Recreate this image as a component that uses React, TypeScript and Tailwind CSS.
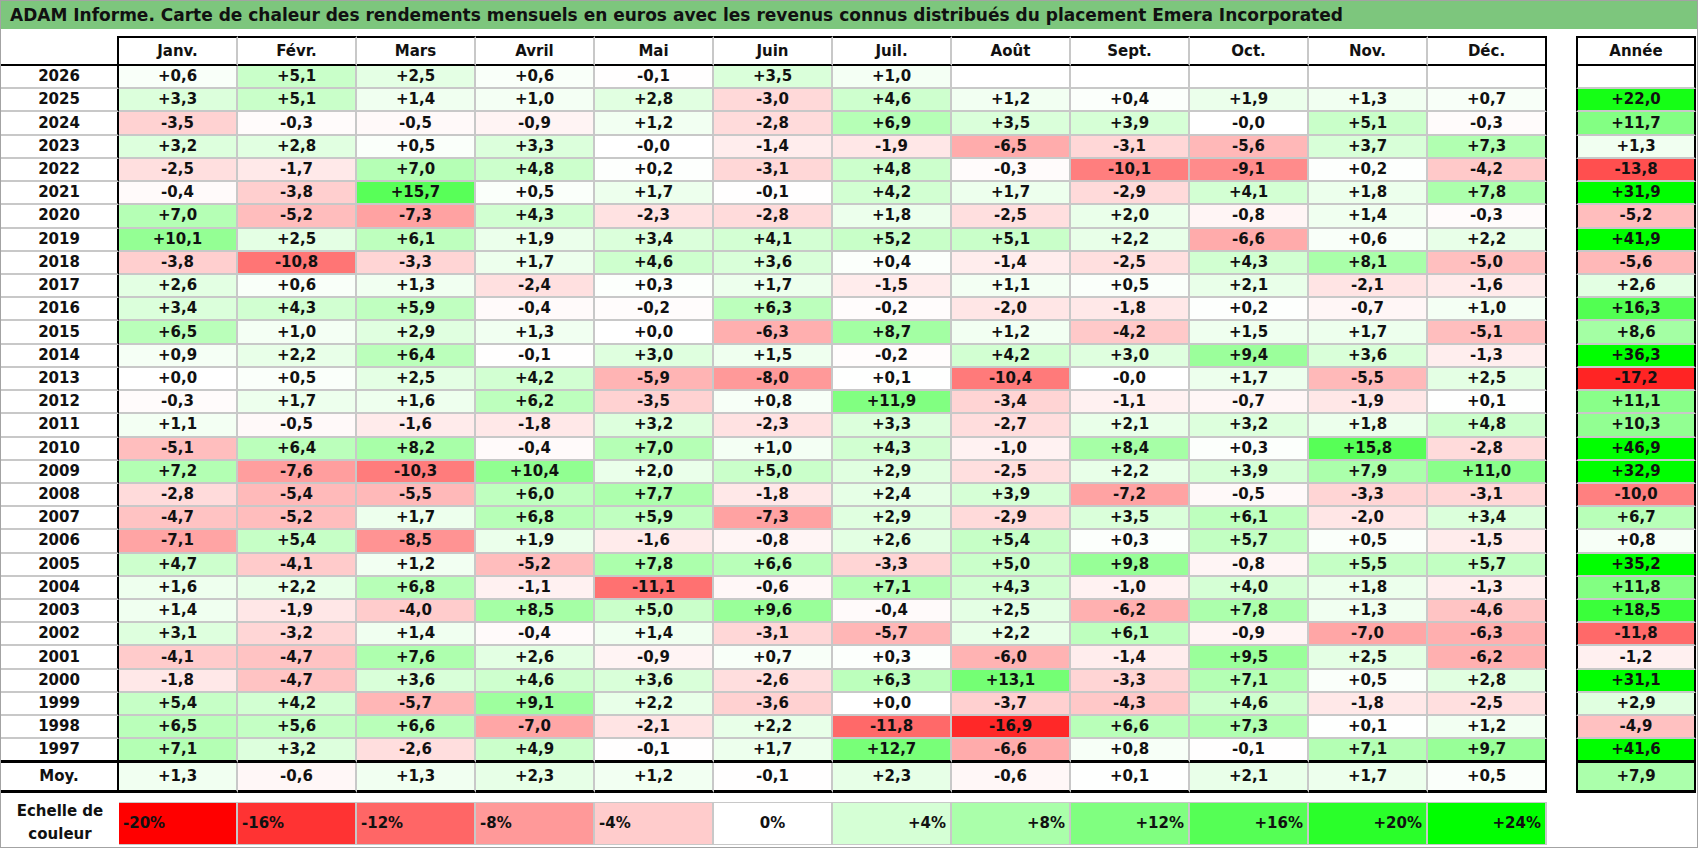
const MONTHS = ["Janv.", "Févr.", "Mars", "Avril", "Mai", "Juin", "Juil.", "Août", "Sept.", "Oct.", "Nov.", "Déc."];

// année, rendements mensuels, total annuel
const ROWS: [string, string, string][] = [
  ["2026", "+0,6 +5,1 +2,5 +0,6 -0,1 +3,5 +1,0", ""],
  ["2025", "+3,3 +5,1 +1,4 +1,0 +2,8 -3,0 +4,6 +1,2 +0,4 +1,9 +1,3 +0,7", "+22,0"],
  ["2024", "-3,5 -0,3 -0,5 -0,9 +1,2 -2,8 +6,9 +3,5 +3,9 -0,0 +5,1 -0,3", "+11,7"],
  ["2023", "+3,2 +2,8 +0,5 +3,3 -0,0 -1,4 -1,9 -6,5 -3,1 -5,6 +3,7 +7,3", "+1,3"],
  ["2022", "-2,5 -1,7 +7,0 +4,8 +0,2 -3,1 +4,8 -0,3 -10,1 -9,1 +0,2 -4,2", "-13,8"],
  ["2021", "-0,4 -3,8 +15,7 +0,5 +1,7 -0,1 +4,2 +1,7 -2,9 +4,1 +1,8 +7,8", "+31,9"],
  ["2020", "+7,0 -5,2 -7,3 +4,3 -2,3 -2,8 +1,8 -2,5 +2,0 -0,8 +1,4 -0,3", "-5,2"],
  ["2019", "+10,1 +2,5 +6,1 +1,9 +3,4 +4,1 +5,2 +5,1 +2,2 -6,6 +0,6 +2,2", "+41,9"],
  ["2018", "-3,8 -10,8 -3,3 +1,7 +4,6 +3,6 +0,4 -1,4 -2,5 +4,3 +8,1 -5,0", "-5,6"],
  ["2017", "+2,6 +0,6 +1,3 -2,4 +0,3 +1,7 -1,5 +1,1 +0,5 +2,1 -2,1 -1,6", "+2,6"],
  ["2016", "+3,4 +4,3 +5,9 -0,4 -0,2 +6,3 -0,2 -2,0 -1,8 +0,2 -0,7 +1,0", "+16,3"],
  ["2015", "+6,5 +1,0 +2,9 +1,3 +0,0 -6,3 +8,7 +1,2 -4,2 +1,5 +1,7 -5,1", "+8,6"],
  ["2014", "+0,9 +2,2 +6,4 -0,1 +3,0 +1,5 -0,2 +4,2 +3,0 +9,4 +3,6 -1,3", "+36,3"],
  ["2013", "+0,0 +0,5 +2,5 +4,2 -5,9 -8,0 +0,1 -10,4 -0,0 +1,7 -5,5 +2,5", "-17,2"],
  ["2012", "-0,3 +1,7 +1,6 +6,2 -3,5 +0,8 +11,9 -3,4 -1,1 -0,7 -1,9 +0,1", "+11,1"],
  ["2011", "+1,1 -0,5 -1,6 -1,8 +3,2 -2,3 +3,3 -2,7 +2,1 +3,2 +1,8 +4,8", "+10,3"],
  ["2010", "-5,1 +6,4 +8,2 -0,4 +7,0 +1,0 +4,3 -1,0 +8,4 +0,3 +15,8 -2,8", "+46,9"],
  ["2009", "+7,2 -7,6 -10,3 +10,4 +2,0 +5,0 +2,9 -2,5 +2,2 +3,9 +7,9 +11,0", "+32,9"],
  ["2008", "-2,8 -5,4 -5,5 +6,0 +7,7 -1,8 +2,4 +3,9 -7,2 -0,5 -3,3 -3,1", "-10,0"],
  ["2007", "-4,7 -5,2 +1,7 +6,8 +5,9 -7,3 +2,9 -2,9 +3,5 +6,1 -2,0 +3,4", "+6,7"],
  ["2006", "-7,1 +5,4 -8,5 +1,9 -1,6 -0,8 +2,6 +5,4 +0,3 +5,7 +0,5 -1,5", "+0,8"],
  ["2005", "+4,7 -4,1 +1,2 -5,2 +7,8 +6,6 -3,3 +5,0 +9,8 -0,8 +5,5 +5,7", "+35,2"],
  ["2004", "+1,6 +2,2 +6,8 -1,1 -11,1 -0,6 +7,1 +4,3 -1,0 +4,0 +1,8 -1,3", "+11,8"],
  ["2003", "+1,4 -1,9 -4,0 +8,5 +5,0 +9,6 -0,4 +2,5 -6,2 +7,8 +1,3 -4,6", "+18,5"],
  ["2002", "+3,1 -3,2 +1,4 -0,4 +1,4 -3,1 -5,7 +2,2 +6,1 -0,9 -7,0 -6,3", "-11,8"],
  ["2001", "-4,1 -4,7 +7,6 +2,6 -0,9 +0,7 +0,3 -6,0 -1,4 +9,5 +2,5 -6,2", "-1,2"],
  ["2000", "-1,8 -4,7 +3,6 +4,6 +3,6 -2,6 +6,3 +13,1 -3,3 +7,1 +0,5 +2,8", "+31,1"],
  ["1999", "+5,4 +4,2 -5,7 +9,1 +2,2 -3,6 +0,0 -3,7 -4,3 +4,6 -1,8 -2,5", "+2,9"],
  ["1998", "+6,5 +5,6 +6,6 -7,0 -2,1 +2,2 -11,8 -16,9 +6,6 +7,3 +0,1 +1,2", "-4,9"],
  ["1997", "+7,1 +3,2 -2,6 +4,9 -0,1 +1,7 +12,7 -6,6 +0,8 -0,1 +7,1 +9,7", "+41,6"],
];
const AVG = "+1,3 -0,6 +1,3 +2,3 +1,2 -0,1 +2,3 -0,6 +0,1 +2,1 +1,7 +0,5".split(" ");
const AVG_YEAR = "+7,9";
const SCALE = [-20, -16, -12, -8, -4, 0, 4, 8, 12, 16, 20, 24];

// rouge plein à -20 %, vert plein à +24 %
function heat(v: number | null) {
  if (v === null || v === 0) return "#ffffff";
  if (v < 0) {
    const c = Math.round(255 * (1 - Math.min(-v / 20, 1)));
    return `rgb(255,${c},${c})`;
  }
  const c = Math.round(255 * (1 - Math.min(v / 24, 1)));
  return `rgb(${c},255,${c})`;
}

const num = (s: string) => (s ? Number(s.replace(",", ".")) : null);

export default function App() {
  const rowBottom = (last: boolean) =>
    last ? "border-b-[3px] border-b-black" : "border-b-2 border-b-[#c8c8c8]";

  return (
    <div className="w-[1698px] h-[848px] overflow-hidden border border-[#a3a3a3] bg-white font-['DejaVu_Sans',sans-serif] text-[#111] font-bold">
      <div className="flex h-[28px] items-center bg-[#7dc67d] pl-[9px] text-[17px] leading-none">
        ADAM Informe. Carte de chaleur des rendements mensuels en euros avec les revenus connus distribués du placement Emera Incorporated
      </div>

      <div className="mt-[7px] grid grid-cols-[118px_repeat(12,119px)_29px_120px] text-[15px] leading-none">
        {/* en-tête */}
        <div className="h-[30px] border-b-2 border-r-2 border-b-black border-r-black" />
        {MONTHS.map((m, i) => (
          <div
            key={m}
            className={`flex h-[30px] items-center justify-center border-y-2 border-r-2 border-y-black ${
              i === 11 ? "border-r-black" : "border-r-[#c8c8c8]"
            }`}
          >
            {m}
          </div>
        ))}
        <div />
        <div className="flex h-[30px] items-center justify-center border-2 border-black">Année</div>

        {/* années */}
        {ROWS.map(([year, vals, total], ri) => {
          const last = ri === ROWS.length - 1;
          const list = vals.split(" ");
          return [
            <div key={year} className={`flex h-[23.23px] items-center justify-center border-r-2 border-r-black ${rowBottom(last)}`}>
              {year}
            </div>,
            ...MONTHS.map((m, mi) => {
              const s = list[mi] ?? "";
              return (
                <div
                  key={year + m}
                  style={{ backgroundColor: heat(num(s)) }}
                  className={`flex h-[23.23px] items-center justify-center border-r-2 ${
                    mi === 11 ? "border-r-black" : "border-r-[#c8c8c8]"
                  } ${rowBottom(last)}`}
                >
                  {s}
                </div>
              );
            }),
            <div key={year + "gap"} />,
            <div
              key={year + "y"}
              style={{ backgroundColor: heat(num(total)) }}
              className={`flex h-[23.23px] items-center justify-center border-x-2 border-x-black ${rowBottom(last)}`}
            >
              {total}
            </div>,
          ];
        })}

        {/* moyenne */}
        <div className="flex h-[30px] items-center justify-center border-b-[3px] border-r-2 border-b-black border-r-black">Moy.</div>
        {AVG.map((s, mi) => (
          <div
            key={"avg" + mi}
            style={{ backgroundColor: heat(num(s)) }}
            className={`flex h-[30px] items-center justify-center border-b-[3px] border-r-2 border-b-black ${
              mi === 11 ? "border-r-black" : "border-r-[#c8c8c8]"
            }`}
          >
            {s}
          </div>
        ))}
        <div />
        <div
          style={{ backgroundColor: heat(num(AVG_YEAR)) }}
          className="flex h-[30px] items-center justify-center border-x-2 border-b-[3px] border-black"
        >
          {AVG_YEAR}
        </div>
      </div>

      {/* échelle */}
      <div className="mt-[9px] grid grid-cols-[118px_repeat(12,119px)] text-[15px]">
        <div className="flex h-[43px] flex-col items-center justify-center leading-[23px]">
          <span>Echelle de</span>
          <span>couleur</span>
        </div>
        {SCALE.map((v) => (
          <div
            key={v}
            style={{ backgroundColor: heat(v) }}
            className={`flex h-[43px] items-center border-y border-r-2 border-[#c8c8c8] ${
              v < 0 ? "justify-start pl-[4px]" : v === 0 ? "justify-center" : "justify-end pr-[4px]"
            }`}
          >
            {v > 0 ? `+${v}%` : `${v}%`}
          </div>
        ))}
      </div>
    </div>
  );
}
